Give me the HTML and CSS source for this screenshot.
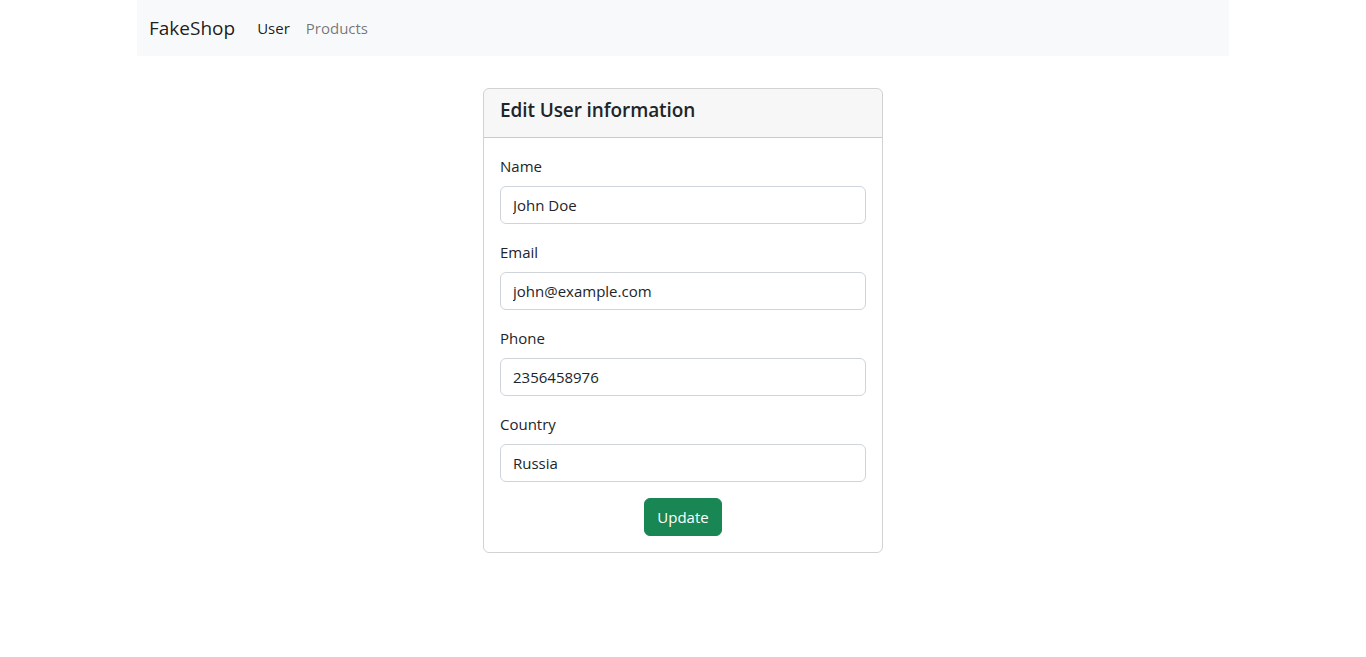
FILE: index.html
```html
<!DOCTYPE html>
<html lang="en">
<head>
<meta charset="utf-8">
<title>FakeShop</title>
<link rel="stylesheet" href="styles.css">
</head>
<body>
<div class="container">
  <nav class="navbar">
    <a class="brand" href="#">FakeShop</a>
    <ul class="nav">
      <li><a class="nav-link active" href="#">User</a></li>
      <li><a class="nav-link" href="#">Products</a></li>
    </ul>
  </nav>
  <main class="main">
    <section class="card">
      <div class="card-header"><h4>Edit User information</h4></div>
      <form class="card-body">
        <div class="field">
          <label for="name">Name</label>
          <input id="name" type="text" value="John Doe">
        </div>
        <div class="field">
          <label for="email">Email</label>
          <input id="email" type="email" value="john@example.com">
        </div>
        <div class="field">
          <label for="phone">Phone</label>
          <input id="phone" type="text" value="2356458976">
        </div>
        <div class="field">
          <label for="country">Country</label>
          <input id="country" type="text" value="Russia">
        </div>
        <div class="actions">
          <button type="button" class="btn">Update</button>
        </div>
      </form>
    </section>
  </main>
</div>
</body>
</html>
```

FILE: styles.css
```css
* { box-sizing: border-box; }
html, body { margin: 0; padding: 0; }
body {
  font-family: "Open Sans", "Noto Sans", "Liberation Sans", sans-serif;
  font-size: 15px;
  line-height: 24px;
  color: #212529;
  background: #fff;
}
.container {
  width: 1092px;
  margin: 0 auto;
}
.navbar {
  height: 56px;
  background: #f8f9fa;
  display: flex;
  align-items: center;
  padding: 0 12px;
}
.brand {
  font-size: 19px;
  line-height: 30px;
  color: rgba(0,0,0,.9);
  text-decoration: none;
  margin-right: 14px;
}
.nav {
  list-style: none;
  margin: 0;
  padding: 0;
  display: flex;
}
.nav-link {
  display: block;
  padding: 8px 8px;
  color: rgba(0,0,0,.55);
  text-decoration: none;
}
.nav-link.active { color: rgba(0,0,0,.9); }
.main {
  display: flex;
  justify-content: center;
  padding-top: 32px;
}
.card {
  width: 400px;
  border: 1px solid rgba(0,0,0,.175);
  border-radius: 6px;
  overflow: hidden;
}
.card-header {
  background: rgba(0,0,0,.03);
  border-bottom: 1px solid rgba(0,0,0,.175);
  padding: 9px 16px 8px;
}
.card-header h4 {
  margin: 0 0 7px;
  font-size: 19px;
  line-height: 24px;
  font-weight: 600;
  letter-spacing: -0.1px;
}
.card-body {
  padding: 16px;
  margin: 0;
}
.field { margin-bottom: 16px; }
.field label {
  display: block;
  margin-bottom: 8px;
}
.field input {
  display: block;
  width: 100%;
  height: 38px;
  padding: 6px 12px;
  font: inherit;
  color: #212529;
  border: 1px solid #ced4da;
  border-radius: 6px;
  background: #fff;
}
.actions {
  display: flex;
  justify-content: center;
}
.btn {
  height: 38px;
  padding: 6px 12px;
  font: inherit;
  color: #fff;
  background: #198754;
  border: 1px solid #198754;
  border-radius: 6px;
}
```
